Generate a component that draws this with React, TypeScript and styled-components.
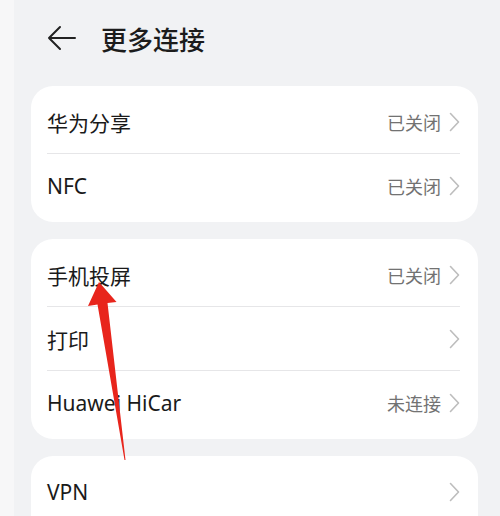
import React from "react";
import styled, { createGlobalStyle } from "styled-components";

const Global = createGlobalStyle`
  html, body { margin: 0; padding: 0; }
  body {
    background: linear-gradient(to right, #f7f7f8 0 14px, #f1f2f4 14px);
    font-family: "Noto Sans", "Noto Sans CJK SC", sans-serif;
    -webkit-font-smoothing: antialiased;
  }
`;

const Page = styled.div`
  position: relative;
  width: 500px;
  height: 516px;
  overflow: hidden;
  box-sizing: border-box;
  padding: 0 22px 0 31px;
`;

const Header = styled.div`
  display: flex;
  align-items: center;
  height: 76px;
  padding-left: 16px;
  gap: 24px;
`;

const Title = styled.h1`
  margin: 0;
  font-family: "Noto Sans CJK SC", sans-serif;
  font-size: 26px;
  font-weight: 500;
  color: #1c1c1c;
`;

const Card = styled.div<{ $top: number }>`
  background: #ffffff;
  border-radius: 22px;
  padding: 4px 18px 4px 16px;
  margin-top: ${(p) => p.$top}px;
`;

const Row = styled.div<{ $divider?: boolean }>`
  display: flex;
  align-items: center;
  height: 64px;
  box-sizing: border-box;
  border-bottom: ${(p) => (p.$divider ? "1px solid #e6e6e8" : "none")};
`;

const Label = styled.span`
  flex: 1;
  font-family: "Noto Sans", "Noto Sans CJK SC", sans-serif;
  font-size: 21px;
  color: #1a1a1a;
`;

const Value = styled.span`
  font-family: "Noto Sans CJK SC", sans-serif;
  font-size: 18px;
  color: #727272;
  margin-right: 8px;
`;

const Chevron = () => (
  <svg width="11" height="20" viewBox="0 0 11 20">
    <path d="M1.5 1.5 L9.5 10 L1.5 18.5" fill="none" stroke="#bdbdbd" strokeWidth="1.6" strokeLinecap="round" strokeLinejoin="round" />
  </svg>
);

const BackIcon = () => (
  <svg width="30" height="26" viewBox="0 0 30 26">
    <path d="M28 13 H2 M13 2 L2 13 L13 24" fill="none" stroke="#222" strokeWidth="2" strokeLinecap="round" strokeLinejoin="round" />
  </svg>
);

const Overlay = styled.svg`
  position: absolute;
  left: 0;
  top: 0;
  pointer-events: none;
`;

type Item = { label: string; value?: string };

const Section = ({ items, top }: { items: Item[]; top: number }) => (
  <Card $top={top}>
    {items.map((it, i) => (
      <Row key={it.label} $divider={i < items.length - 1}>
        <Label>{it.label}</Label>
        {it.value && <Value>{it.value}</Value>}
        <Chevron />
      </Row>
    ))}
  </Card>
);

export default function App() {
  return (
    <>
      <Global />
      <Page>
        <Header>
          <BackIcon />
          <Title>更多连接</Title>
        </Header>
        <Section
          top={10}
          items={[
            { label: "华为分享", value: "已关闭" },
            { label: "NFC", value: "已关闭" },
          ]}
        />
        <Section
          top={17}
          items={[
            { label: "手机投屏", value: "已关闭" },
            { label: "打印" },
            { label: "Huawei HiCar", value: "未连接" },
          ]}
        />
        <Section top={17} items={[{ label: "VPN" }, { label: "" }]} />
        <Overlay width="500" height="516" viewBox="0 0 500 516">
          <polygon
            points="99,282 116.5,302 107.5,303 125.5,460 124.5,460 97.5,304.5 88,306"
            fill="#e8251c"
          />
        </Overlay>
      </Page>
    </>
  );
}
